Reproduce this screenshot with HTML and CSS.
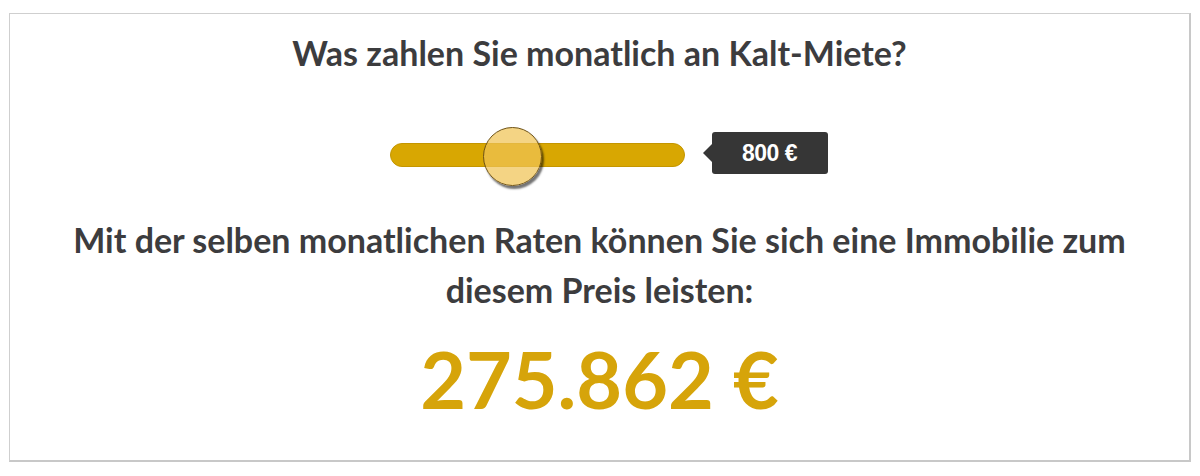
FILE: index.html
```html
<!DOCTYPE html>
<html lang="de">
<head>
    <meta charset="UTF-8">
    <title>Mietrechner</title>
    <link rel="stylesheet" href="styles.css">
</head>
<body>
<div class="calc">
    <h2 class="calc-question">Was zahlen Sie monatlich an Kalt-Miete?</h2>
    <div class="slider-row">
        <div class="slider">
            <div class="slider-track"></div>
            <div class="slider-thumb" style="left:93px"></div>
        </div>
        <div class="slider-value">800 €</div>
    </div>
    <p class="calc-text">Mit der selben monatlichen Raten können Sie sich eine Immobilie zum diesem Preis leisten:</p>
    <div class="calc-price">275.862 €</div>
</div>
</body>
</html>
```

FILE: styles.css
```css
*{margin:0;padding:0;box-sizing:border-box;}
body{background:#fff;font-family:Lato,"Liberation Sans",sans-serif;color:#3c3c3e;padding:13px 9px 0 9px;}
.calc{width:1182px;height:449px;border:1px solid #cfcfcf;border-right:2px solid #c8c8c8;border-bottom:2px solid #c8c8c8;text-align:center;padding-top:19px;}
.calc-question{font-size:34px;font-weight:700;line-height:40px;}
.slider-row{display:flex;justify-content:center;align-items:center;margin-top:52px;height:60px;padding-left:18px;}
.slider{position:relative;width:295px;height:60px;}
.slider-track{position:absolute;left:0;right:0;top:18px;height:24px;border-radius:12px;background:#d8a702;border:1px solid #c49600;}
.slider-thumb{position:absolute;top:2px;width:59px;height:59px;border-radius:50%;background:rgba(240,196,84,.72);border:1px solid #6e5216;box-shadow:2px 3px 2px rgba(0,0,0,.55);}
.slider-value{position:relative;margin-left:27px;width:116px;height:42px;margin-top:-4px;background:#363636;border-radius:3px;color:#fff;font-family:"Liberation Sans",Arial,sans-serif;font-weight:700;font-size:23px;line-height:42px;letter-spacing:-0.5px;}
.slider-value::before{content:"";position:absolute;left:-9px;top:12px;border-top:9px solid transparent;border-bottom:9px solid transparent;border-right:9px solid #363636;}
.calc-text{font-size:34px;font-weight:700;line-height:50px;margin:30px 50px 0;}
.calc-price{font-size:79px;font-weight:700;color:#d6a40a;line-height:100px;margin-top:14px;}
```
